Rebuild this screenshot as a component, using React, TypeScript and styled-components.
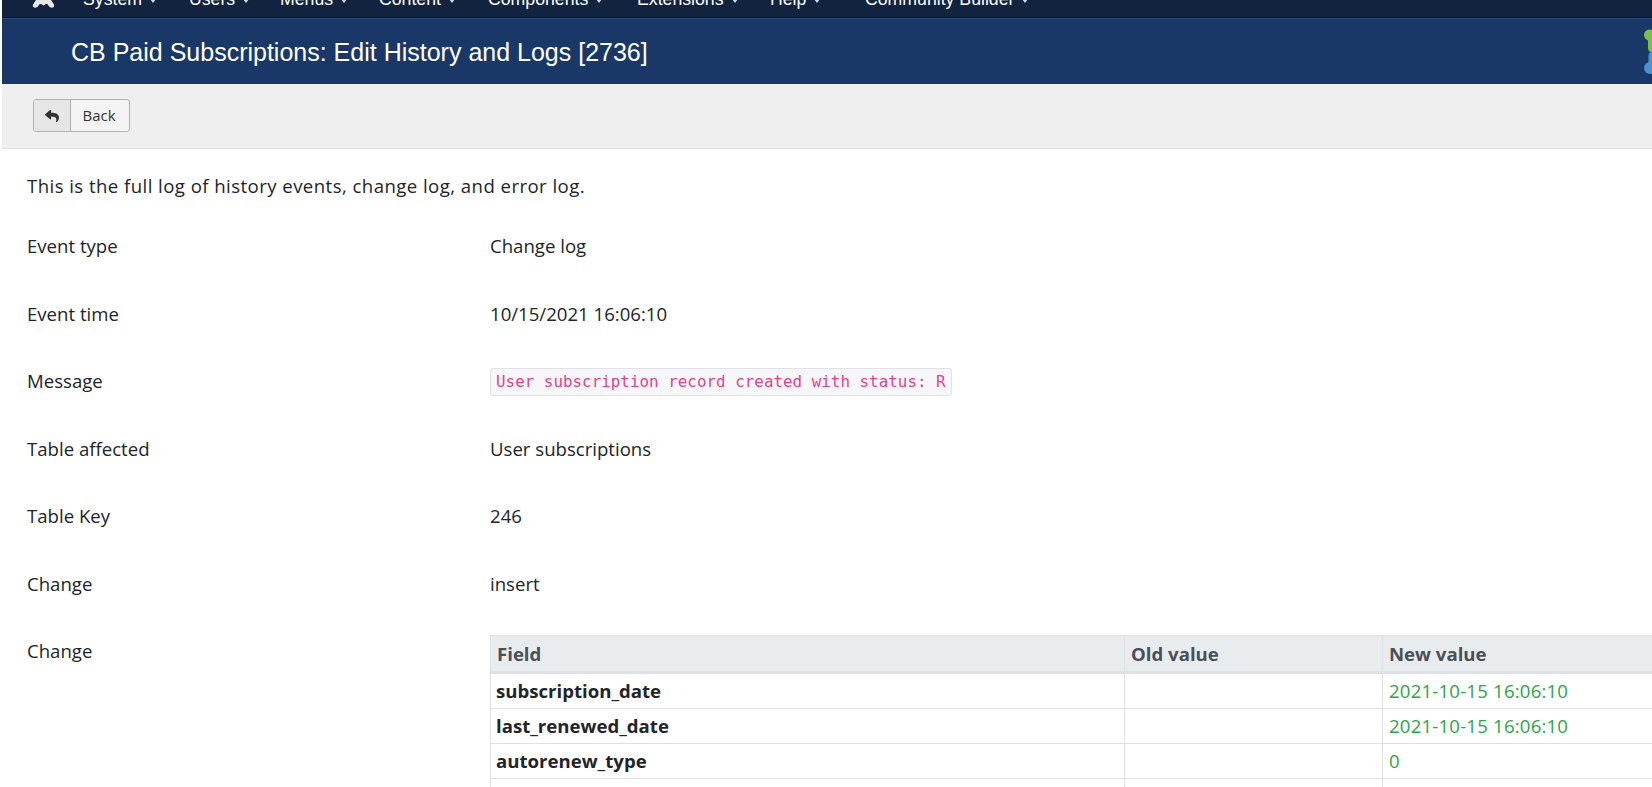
import styled, { createGlobalStyle } from 'styled-components';
import { FaReply } from 'react-icons/fa';

const GlobalStyle = createGlobalStyle`
  html, body {
    margin: 0;
    padding: 0;
    background: #fff;
    overflow: hidden;
  }
`;

const Page = styled.div`
  width: 1652px;
  height: 787px;
  overflow: hidden;
  padding-left: 2px;
  box-sizing: border-box;
  font-family: 'Open Sans', sans-serif;
  color: #212529;
`;

const Navbar = styled.nav`
  height: 18px;
  overflow: hidden;
  display: flex;
  align-items: flex-start;
  background: #11233f;
  border-bottom: 1px solid #0b1626;
  box-sizing: border-box;
  padding-left: 30px;
  font-family: 'Liberation Sans', Arial, sans-serif;
  font-size: 17.7px;
  color: #fff;
`;

const BrandIcon = styled.svg`
  width: 24px;
  height: 18px;
  flex: none;
  margin-right: 27px;
`;

const NavItem = styled.span<{ $w: number }>`
  width: ${p => p.$w}px;
  flex: none;
  line-height: 20px;
  white-space: nowrap;
  margin-top: -11px;
  &::after {
    content: '';
    display: inline-block;
    margin-left: 8px;
    vertical-align: 2px;
    border-top: 4px solid #d8dce3;
    border-left: 3.5px solid transparent;
    border-right: 3.5px solid transparent;
  }
`;

const TitleBar = styled.header`
  height: 66px;
  background: #1a3867;
  border-top: 1px solid #2b4a7b;
  box-sizing: border-box;
  padding-left: 69px;
  display: flex;
  align-items: center;
  justify-content: space-between;
  overflow: hidden;
`;

const Title = styled.h1`
  margin: 2px 0 0;
  font-family: 'Liberation Sans', Arial, sans-serif;
  font-size: 25px;
  font-weight: 400;
  color: #fff;
`;

const Logo = styled.svg`
  width: 8px;
  height: 60px;
  flex: none;
`;

const Toolbar = styled.div`
  height: 65px;
  background: #efefef;
  border-bottom: 1px solid #dedede;
  box-sizing: border-box;
  padding: 15px 0 0 31px;
`;

const BackButton = styled.button`
  display: flex;
  width: 97px;
  height: 33px;
  padding: 0;
  background: #f4f4f4;
  border: 1px solid #b3b3b3;
  border-radius: 3px;
  box-sizing: border-box;
  overflow: hidden;
  font-family: 'Open Sans', sans-serif;
  font-size: 15px;
  color: #333;
`;

const BackIcon = styled.span`
  width: 36px;
  background: #e6e6e6;
  border-right: 1px solid #b3b3b3;
  display: flex;
  align-items: center;
  justify-content: center;
  font-size: 14px;
  color: #333;
`;

const BackLabel = styled.span`
  flex: 1;
  line-height: 31px;
  text-align: center;
  padding-right: 2px;
`;

const Content = styled.main`
  padding: 25px 0 0 25px;
  font-size: 18.6px;
  line-height: 24px;
`;

const Intro = styled.p`
  margin: 0 0 36px;
  letter-spacing: 0.44px;
`;

const Row = styled.div`
  display: grid;
  grid-template-columns: 463px 1fr;
  min-height: 24px;
  margin-bottom: 43.5px;
`;

const Label = styled.div``;

const Value = styled.div``;

const Code = styled.code`
  display: inline-block;
  vertical-align: top;
  font-family: 'DejaVu Sans Mono', monospace;
  font-size: 15.9px;
  line-height: 26px;
  color: #e83e8c;
  background: #f7f7f9;
  border: 1px solid #e1e1e8;
  border-radius: 3px;
  padding: 0 5px;
  margin: -1px 0 -3px;
`;

const ChangeTable = styled.table`
  table-layout: fixed;
  width: 1200px;
  border-collapse: collapse;
  margin-top: -4px;
`;

const HeadCell = styled.th`
  background: #e9ecef;
  color: #495057;
  font-weight: 700;
  text-align: left;
  padding: 6px 6px 5px;
  border: 1px solid #dee2e6;
  border-bottom: 3px solid #dee2e6;
`;

const FieldCell = styled.th`
  text-align: left;
  font-weight: 700;
  padding: 5px 5px 5px;
  border: 1px solid #dee2e6;
`;

const Cell = styled.td<{ $new?: boolean }>`
  padding: 5px 6px 5px;
  border: 1px solid #dee2e6;
  letter-spacing: 0.2px;
  color: ${p => (p.$new ? '#28a745' : 'inherit')};
`;

const navItems = [
  { label: 'System', w: 106 },
  { label: 'Users', w: 91 },
  { label: 'Menus', w: 99 },
  { label: 'Content', w: 109 },
  { label: 'Components', w: 149 },
  { label: 'Extensions', w: 133 },
  { label: 'Help', w: 95 },
  { label: 'Community Builder', w: 200 },
];

const details = [
  { label: 'Event type', value: 'Change log' },
  { label: 'Event time', value: '10/15/2021 16:06:10' },
  { label: 'Message', value: <Code>User subscription record created with status: R</Code> },
  { label: 'Table affected', value: 'User subscriptions' },
  { label: 'Table Key', value: '246' },
  { label: 'Change', value: 'insert' },
];

const changes = [
  { field: 'subscription_date', value: '2021-10-15 16:06:10' },
  { field: 'last_renewed_date', value: '2021-10-15 16:06:10' },
  { field: 'autorenew_type', value: '0' },
  { field: 'autorecurring_type', value: '0' },
];

const App = () => {
  return (
    <Page>
      <GlobalStyle />
      <Navbar>
        <BrandIcon viewBox="0 0 24 18">
          <path
            d="M4 0h15l3 4.500c.7 1.700-.4 3.200-2.200 3.200-1.300 0-2.200-.6-3-1.700l-1.500-2h-1.500l-2.300 1.600-2.300-1.600h-1.500l-1.500 2c-.8 1.100-1.700 1.700-3 1.700-1.800 0-2.900-1.500-2.200-3.200z"
            fill="#e6e8ec"
          />
        </BrandIcon>
        {navItems.map(item => (
          <NavItem key={item.label} $w={item.w}>
            {item.label}
          </NavItem>
        ))}
      </Navbar>
      <TitleBar>
        <Title>CB Paid Subscriptions: Edit History and Logs [2736]</Title>
        <Logo viewBox="0 0 8 60">
          <circle cx="5.500" cy="13" r="5.500" fill="#7ac143" />
          <rect x="4" y="8" width="10" height="22" rx="4" fill="#7ac143" />
          <circle cx="6" cy="46" r="6" fill="#5091cd" />
          <rect x="4.500" y="30" width="10" height="20" rx="4" fill="#5091cd" />
        </Logo>
      </TitleBar>
      <Toolbar>
        <BackButton>
          <BackIcon>
            <FaReply />
          </BackIcon>
          <BackLabel>Back</BackLabel>
        </BackButton>
      </Toolbar>
      <Content>
        <Intro>This is the full log of history events, change log, and error log.</Intro>
        {details.map(row => (
          <Row key={row.label}>
            <Label>{row.label}</Label>
            <Value>{row.value}</Value>
          </Row>
        ))}
        <Row>
          <Label>Change</Label>
          <Value>
            <ChangeTable>
              <colgroup>
                <col width={634} />
                <col width={258} />
                <col />
              </colgroup>
              <thead>
                <tr>
                  <HeadCell>Field</HeadCell>
                  <HeadCell>Old value</HeadCell>
                  <HeadCell>New value</HeadCell>
                </tr>
              </thead>
              <tbody>
                {changes.map(change => (
                  <tr key={change.field}>
                    <FieldCell>{change.field}</FieldCell>
                    <Cell />
                    <Cell $new>{change.value}</Cell>
                  </tr>
                ))}
              </tbody>
            </ChangeTable>
          </Value>
        </Row>
      </Content>
    </Page>
  );
};

export default App;
